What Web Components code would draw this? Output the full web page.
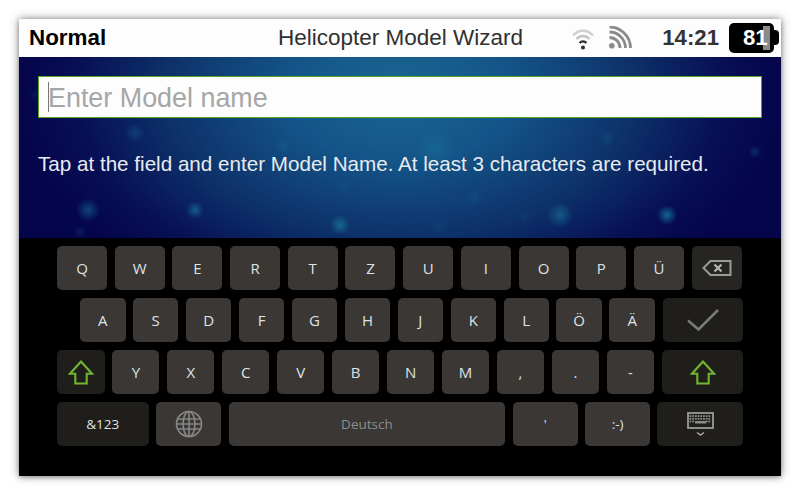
<!DOCTYPE html>
<html lang="de">
<head>
<meta charset="utf-8">
<title>Helicopter Model Wizard</title>
<style>
html,body{margin:0;padding:0;background:#fff;width:800px;height:495px;overflow:hidden}
body{font-family:"Liberation Sans",Arial,sans-serif}
</style>
</head>
<body>
<wizard-window>
  <status-bar slot="top" mode="Normal" heading="Helicopter Model Wizard" time="14:21" level="81"></status-bar>
  <wizard-panel slot="top">
    <model-field placeholder="Enter Model name"></model-field>
    <p slot="hint">Tap at the field and enter Model Name. At least 3 characters are required.</p>
  </wizard-panel>
  <virtual-keyboard></virtual-keyboard>
</wizard-window>

<script>
function shadow(el, html){ el.attachShadow({mode:'open'}).innerHTML = html; }

customElements.define('wizard-window', class extends HTMLElement{
  constructor(){ super(); shadow(this, `<style>
    :host{display:flex;flex-direction:column;width:762px;height:457px;margin:19px 0 0 19px;background:#000;
      box-shadow:0 0 9px rgba(0,0,0,.45),0 1px 4px rgba(0,0,0,.25)}
  </style><slot name="top"></slot><slot></slot>`); }
});

customElements.define('status-bar', class extends HTMLElement{
  connectedCallback(){
    if(this.shadowRoot) return;
    const a=n=>this.getAttribute(n);
    shadow(this, `<style>
      :host{display:grid;grid-template-columns:1fr auto 1fr;align-items:center;height:38px;background:#fdfdfd;color:#2b2b2b;padding:0 2px 0 10px;box-sizing:border-box;flex:none}
      .mode{font:bold 22.4px/38px "Liberation Sans",sans-serif;color:#000}
      .title{font:22.5px/38px "Liberation Sans",sans-serif;color:#303030;margin-left:-7px;white-space:nowrap}
      .right{display:flex;align-items:center;justify-content:flex-end;min-width:0}
      svg{display:block;flex:none}
      .wifi{margin-right:14px}
      .rss{margin-right:30px}
      .time{font:bold 22.2px/38px "Liberation Sans",sans-serif;color:#333;margin-right:10px}
      .batt{position:relative;width:50px;height:30px;flex:none}
      .body{position:absolute;left:0;top:0;width:45px;height:30px;box-sizing:border-box;background:#000;border-radius:5px;color:#fff;font:bold 22.2px/30px "Liberation Sans",sans-serif;padding-left:14px}
      .tip{position:absolute;left:44px;top:7px;width:6px;height:15px;background:#000;border-radius:0 4px 4px 0}
      .fill{position:absolute;left:34px;top:3px;width:7px;height:24px;background:#8a8a8a}
      .num{position:relative}
    </style>
    <div class="mode">${a('mode')}</div>
    <div class="title">${a('heading')}</div>
    <div class="right">
      <svg class="wifi" width="22" height="24" viewBox="0 0 22 24" fill="none" stroke-linecap="butt">
        <path d="M1 9.500C6.500 3.200 15.500 3.200 21 9.500" stroke="#cfcfcf" stroke-width="2.400"/>
        <path d="M4.500 13C8 9 14 9 17.500 13" stroke="#c4c4c4" stroke-width="2.400"/>
        <path d="M7.500 17C9.500 15 12.500 15 14.500 17" stroke="#2d2d2d" stroke-width="2.300"/>
        <circle cx="11" cy="21.500" r="2" fill="#2d2d2d"/>
      </svg>
      <svg class="rss" width="24" height="24" viewBox="0 0 24 24" fill="none" stroke="#8b8b8b" stroke-width="2.800">
        <circle cx="3.800" cy="19.700" r="2.800" fill="#8b8b8b" stroke="none"/>
        <path d="M1.500 11.500A10.500 10.500 0 0 1 12 22"/>
        <path d="M1.500 6A16 16 0 0 1 17.500 22"/>
        <path d="M1.500 1A21 21 0 0 1 22.500 22"/>
      </svg>
      <div class="time">${a('time')}</div>
      <div class="batt">
        <div class="tip"></div>
        <div class="body"><div class="fill"></div><span class="num">${a('level')}</span></div>
      </div>
    </div>`);
  }
});

customElements.define('wizard-panel', class extends HTMLElement{
  constructor(){ super();
    const dots=[[135,76,10,.2],[88,153,12,.36],[195,153,9,.42],[340,168,10,.42],[283,90,8,.12],[435,93,20,.16],
      [560,158,13,.36],[667,158,10,.55],[607,82,8,.12],[755,95,7,.2],[475,141,8,.1],[80,175,6,.14],[35,38,6,.08],
      [440,170,9,.08],[525,160,6,.1],[345,130,7,.07]];
    const bg=dots.map(([x,y,r,o])=>`radial-gradient(circle ${r}px at ${x-19}px ${y}px,rgba(30,175,195,${o}),rgba(30,175,195,0))`).join(',');
    shadow(this, `<style>
      :host{display:flex;flex-direction:column;box-sizing:border-box;height:181px;flex:none;padding:19px 19px 0;
        background:${bg},radial-gradient(ellipse 381px 235px at 381px 35px,#1a6892 0%,#145488 30%,#0d3169 62%,#070f55 85%,#05054c 100%),#05054c}
      ::slotted(p){margin:34px 0 0;font:20.63px/23px "Liberation Sans",sans-serif;color:#e8ebef;white-space:nowrap}
    </style><slot></slot><slot name="hint"></slot>`);
  }
});

customElements.define('model-field', class extends HTMLElement{
  connectedCallback(){
    if(this.shadowRoot) return;
    shadow(this, `<style>
      :host{display:flex;align-items:center;box-sizing:border-box;height:42px;background:#fdfdfd;border:1px solid #57a625;padding-left:9px;flex:none}
      .caret{width:1px;height:30px;background:#777;flex:none}
      .ph{font:26.9px/40px "Liberation Sans",sans-serif;color:#a6a6a6;white-space:nowrap;margin:2px 0 0 -1px}
    </style><div class="caret"></div><div class="ph">${this.getAttribute('placeholder')}</div>`);
  }
});

customElements.define('kb-key', class extends HTMLElement{
  constructor(){ super(); shadow(this, `<style>
    :host{display:flex;align-items:center;justify-content:center;box-sizing:border-box;height:100%;width:var(--w,50px);flex:none;
      background:#3a3734;border-radius:5px;color:#dfe3e6;font:var(--fs,13.5px) "Open Sans",sans-serif}
    :host([dark]){background:#201e1b}
    :host([mid]){background:#262522}
    svg{display:block}
  </style><slot></slot>`); }
});

const ARROW='<svg width="26" height="25" viewBox="0 0 26 25" fill="none" stroke="#6fb52f" stroke-width="2.100"><path d="M13 1.500L2 13.700H7.300V23.500H18.700V13.700H24Z"/></svg>';

customElements.define('virtual-keyboard', class extends HTMLElement{
  constructor(){ super();
    const k=(t,w,attr='',fs='')=>`<kb-key style="--w:${w}px;${fs?`--fs:${fs}px`:''}" ${attr}>${t}</kb-key>`;
    const keys=(s,w)=>[...s].map(c=>k(c,w,'',/[A-ZÄÖÜ]/.test(c)?15:14.5)).join('');
    const back='<svg width="30" height="16" viewBox="0 0 30 16" fill="none" stroke="#9b9b9b" stroke-width="2"><path d="M8.500 1H28.500V15H8.500L1.500 8Z"/><path d="M12.500 4.500L19.500 11.500M19.500 4.500L12.500 11.500" stroke="#b5b5b5" stroke-width="2.200"/></svg>';
    const check='<svg width="32" height="22" viewBox="0 0 32 22" fill="none" stroke="#7b7b7b" stroke-width="2.500"><path d="M1 11.500L11.500 20.500L31 1"/></svg>';
    const globe='<svg width="28" height="28" viewBox="0 0 28 28" fill="none" stroke="#878787" stroke-width="1.600"><circle cx="14" cy="14" r="12.500"/><ellipse cx="14" cy="14" rx="6" ry="12.500"/><path d="M14 1.500V26.500M2.500 9H25.500M2.500 19H25.500M1.500 14H26.500"/></svg>';
    let dots='';
    for(let r=0;r<3;r++)for(let c=0;c<8;c++)if(r<2||c<2||c>5)dots+=`<rect x="${3.500+c*2.700}" y="${3.200+r*2.700}" width="1.800" height="1.800"/>`;
    const kbd=`<svg width="28" height="25" viewBox="0 0 28 25" fill="none"><rect x="2" y="1" width="25" height="15" stroke="#9a9a9a" stroke-width="1.800"/><g fill="#8c8c8c">${dots}</g><rect x="9" y="9" width="11" height="2.500" fill="#8c8c8c"/><path d="M11 20.500L14.500 23L18 20.500" stroke="#aaa" stroke-width="1.500"/></svg>`;
    shadow(this, `<style>
      :host{display:flex;flex-direction:column;gap:8.300px;flex:1;padding:7.500px 38px 0;box-sizing:border-box}
      .row{display:flex;height:44px;flex:none}
      .r1{gap:7.700px}
      .r2{gap:7.450px;padding-left:23px}
      .r2 .wide{margin-left:.5px}
      .r3{gap:7.950px}
      .r4{gap:7.600px}
    </style>
    <div class="row r1">${keys('QWERTZUIOPÜ',50)}${k(back,50,'mid')}</div>
    <div class="row r2">${keys('ASDFGHJKLÖÄ',45.500)}${k(check,80,'dark class="wide"')}</div>
    <div class="row r3">${k(ARROW,47.500,'dark')}${keys('YXCVBNM,.-',47)}${k(ARROW,81.500,'dark')}</div>
    <div class="row r4">${k('&amp;123',91.500,'dark')}${k(globe,65)}${k('<span style="color:#8d8d8d">Deutsch</span>',276.500)}${k("'",65)}${k(':-)',64.500)}${k(kbd,86,'dark')}</div>`);
  }
});
</script>
</body>
</html>
